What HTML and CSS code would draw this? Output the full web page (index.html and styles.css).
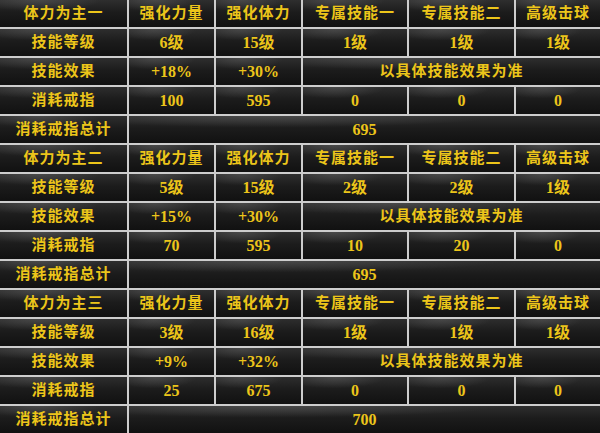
FILE: index.html
```html
<!DOCTYPE html>
<html lang="zh">
<head>
<meta charset="utf-8">
<link rel="stylesheet" href="styles.css">
</head>
<body>
<div class="table">
  <div class="c">体力为主一</div><div class="c">强化力量</div><div class="c">强化体力</div><div class="c">专属技能一</div><div class="c">专属技能二</div><div class="c">高级击球</div>
  <div class="c">技能等级</div><div class="c n">6级</div><div class="c n">15级</div><div class="c n">1级</div><div class="c n">1级</div><div class="c n">1级</div>
  <div class="c">技能效果</div><div class="c n">+18%</div><div class="c n">+30%</div><div class="c span3">以具体技能效果为准</div>
  <div class="c">消耗戒指</div><div class="c n">100</div><div class="c n">595</div><div class="c n">0</div><div class="c n">0</div><div class="c n">0</div>
  <div class="c">消耗戒指总计</div><div class="c n span5">695</div>

  <div class="c">体力为主二</div><div class="c">强化力量</div><div class="c">强化体力</div><div class="c">专属技能一</div><div class="c">专属技能二</div><div class="c">高级击球</div>
  <div class="c">技能等级</div><div class="c n">5级</div><div class="c n">15级</div><div class="c n">2级</div><div class="c n">2级</div><div class="c n">1级</div>
  <div class="c">技能效果</div><div class="c n">+15%</div><div class="c n">+30%</div><div class="c span3">以具体技能效果为准</div>
  <div class="c">消耗戒指</div><div class="c n">70</div><div class="c n">595</div><div class="c n">10</div><div class="c n">20</div><div class="c n">0</div>
  <div class="c">消耗戒指总计</div><div class="c n span5">695</div>

  <div class="c">体力为主三</div><div class="c">强化力量</div><div class="c">强化体力</div><div class="c">专属技能一</div><div class="c">专属技能二</div><div class="c">高级击球</div>
  <div class="c">技能等级</div><div class="c n">3级</div><div class="c n">16级</div><div class="c n">1级</div><div class="c n">1级</div><div class="c n">1级</div>
  <div class="c">技能效果</div><div class="c n">+9%</div><div class="c n">+32%</div><div class="c span3">以具体技能效果为准</div>
  <div class="c">消耗戒指</div><div class="c n">25</div><div class="c n">675</div><div class="c n">0</div><div class="c n">0</div><div class="c n">0</div>
  <div class="c">消耗戒指总计</div><div class="c n span5">700</div>
</div>
</body>
</html>
```
FILE: styles.css
```css
html, body {
  margin: 0;
  padding: 0;
  background: #cdcdcd;
}
.table {
  width: 600px;
  height: 433px;
  display: grid;
  grid-template-columns: 127px 85px 85px 104px 105px 84px;
  grid-auto-rows: 27px;
  gap: 2px;
  background: #cdcdcd;
}
.c {
  display: flex;
  align-items: center;
  justify-content: center;
  background:
    radial-gradient(ellipse 70% 60% at 30% 0%, rgba(95,95,95,0.55), rgba(95,95,95,0) 70%),
    linear-gradient(to bottom, #2e2e2e 0%, #1c1c1c 45%, #111 100%);
  color: #ecc51a;
  font-family: "Liberation Serif", "Noto Sans CJK SC", serif;
  font-weight: bold;
  font-size: 15px;
  letter-spacing: 1px;
  line-height: 1;
  white-space: nowrap;
}
.n {
  font-size: 16px;
  letter-spacing: 0;
}
.span3 { grid-column: span 3; }
.span5 { grid-column: span 5; }
```
